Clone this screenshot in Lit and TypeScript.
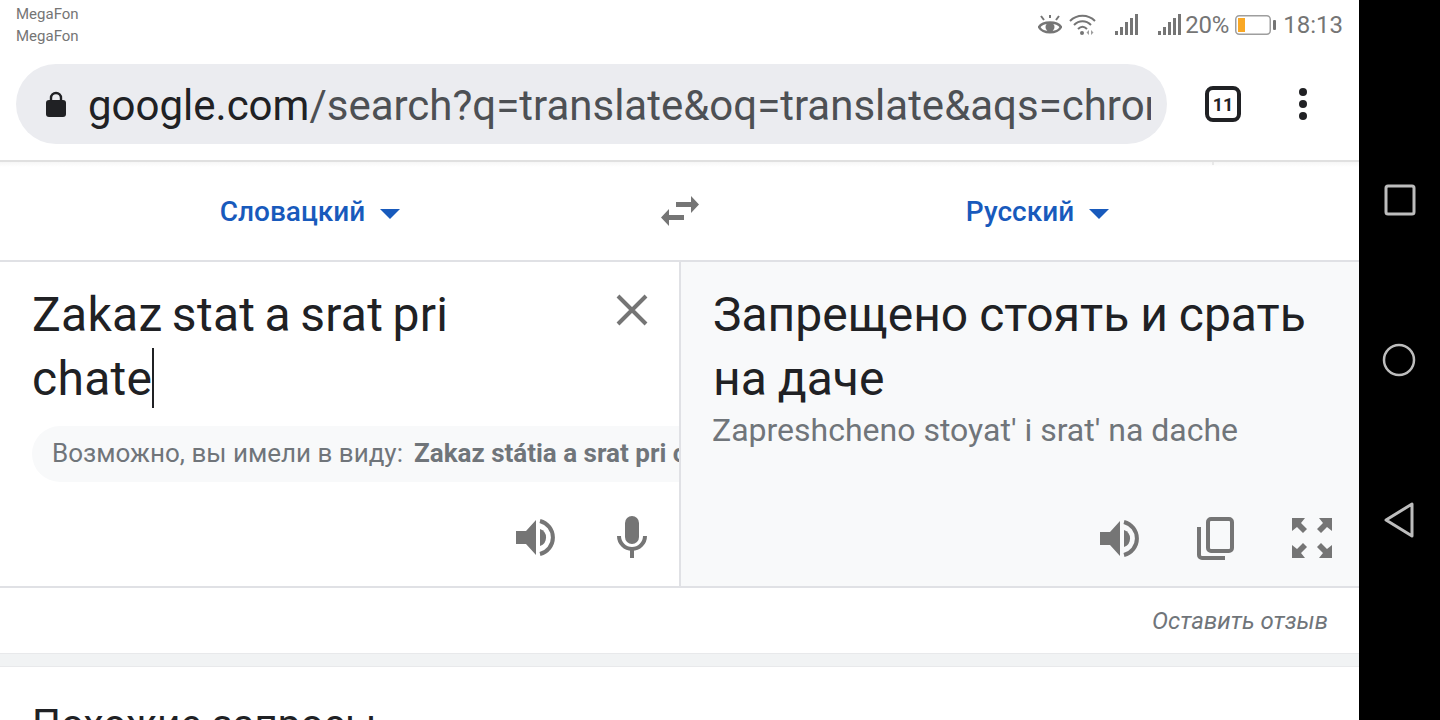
import { LitElement, html, css, svg } from "lit";
import { customElement } from "lit/decorators.js";

const speaker = html`<svg class="ic-speaker" viewBox="0 0 40 40" width="40" height="40" fill="#757575"><path d="M0 13H10L20 2V37L10 26H0Z"/><path d="M24 11A9 9 0 0 1 24 28Z"/><path d="M24 3A17 17 0 0 1 24 36" fill="none" stroke="#757575" stroke-width="4"/></svg>`;
const signal = html`<svg viewBox="0 0 23 22" width="23" height="22" fill="#757575"><rect x="0" y="17" width="3" height="4"/><rect x="5" y="13" width="3" height="8"/><rect x="10" y="8" width="3" height="13"/><rect x="15" y="4" width="3" height="17"/><rect x="20" y="0" width="3" height="21"/></svg>`;
const corner = svg`<path d="M0 0H13L9 5L15 11L11 15L5 9L0 13Z"/>`;

@customElement("app-root")
export class AppRoot extends LitElement {
  static styles = css`
    :host { display: block; width: 1440px; height: 720px; overflow: hidden; font-family: Roboto, "Noto Sans", sans-serif; background: #000; }
    svg { display: block; flex: none; }
    .screen { display: flex; height: 720px; }
    .main { width: 1359px; height: 720px; background: #fff; overflow: hidden; flex: none; }
    .nav { flex: 1; display: flex; flex-direction: column; align-items: center; background: #000; padding-top: 184px; }
    .nav .circle { margin-top: 127px; margin-left: -2px; }
    .nav .back { margin-top: 125px; }

    .status { height: 64px; display: flex; justify-content: space-between; box-sizing: border-box; }
    .carriers { padding: 3px 0 0 16px; font-size: 15px; line-height: 22px; color: #757575; }
    .indicators { display: flex; align-items: center; height: 50px; padding-right: 16px; color: #757575; font-size: 24px; }
    .wifi { margin-left: 7px; }
    .sig1 { margin-left: 19px; }
    .sig2 { margin-left: 20px; }
    .pct { margin-left: 4px; letter-spacing: -0.2px; }
    .batt { margin-left: 6px; }
    .time { margin-left: 7px; }

    .toolbar { height: 96px; display: flex; align-items: flex-start; position: relative; }
    .pill { width: 1151px; height: 80px; margin-left: 16px; background: #ebecf0; border-radius: 40px; display: flex; align-items: center; box-sizing: border-box; padding: 0 16px 0 30px; flex: none; }
    .url { margin-left: 22px; padding-top: 4px; font-size: 42px; line-height: 76px; color: #4d5054; white-space: nowrap; overflow: hidden; min-width: 0; flex: 1; }
    .url b { font-weight: 400; color: #202124; }
    .tabs { margin-left: 38px; width: 36px; height: 36px; box-sizing: border-box; border: 4px solid #202124; border-radius: 8px; margin-top: 22px; display: flex; align-items: center; justify-content: center; font-size: 18px; font-weight: 700; color: #202124; flex: none; }
    .menu { margin-left: 58px; margin-top: 24px; }

    .divider { height: 2px; background: #e0e0e0; position: relative; }
    .tick { position: absolute; left: 1212px; top: 2px; width: 2px; height: 3px; background: #e8e8e8; }
    .lang { height: 98px; display: grid; grid-template-columns: 620px 120px 595px; align-items: center; background: linear-gradient(#f6f6f6, #fff 5px); }
    .lang-item { display: flex; justify-content: center; align-items: center; gap: 15px; color: #185abc; font-size: 28px; font-weight: 500; }
    .swap { justify-self: center; }
    .caret { width: 0; height: 0; border-left: 10px solid transparent; border-right: 10px solid transparent; border-top: 10px solid #185abc; margin-top: 5px; }

    .panels { display: grid; grid-template-columns: 679px 2px 1fr; height: 324px; border-top: 2px solid #e0e1e5; border-bottom: 2px solid #e0e1e5; }
    .vline { background: #e0e1e5; }
    .left, .right { display: flex; flex-direction: column; min-width: 0; overflow: hidden; }
    .right { background: #f8f9fa; }
    .source { padding: 21px 80px 0 32px; font-size: 48px; line-height: 64px; letter-spacing: 0.3px; word-spacing: -3px; color: #202124; position: relative; height: 127px; }
    .cursor { display: inline-block; width: 2px; height: 60px; background: #202124; vertical-align: -13px; margin-left: 0; }
    .close { position: absolute; left: 616px; top: 32px; }
    .chip { margin: 16px 0 0 32px; height: 56px; padding-bottom: 2px; box-sizing: border-box; border-radius: 28px 0 0 28px; background: #f8f9fa; display: flex; align-items: center; padding-left: 20px; font-size: 26px; color: #70757a; white-space: nowrap; overflow: hidden; }
    .chip b { margin-left: 11px; font-weight: 700; }
    .actions { display: flex; align-items: center; height: 42px; margin-top: 34px; }
    .left .actions { padding-left: 516px; }
    .ic-speaker { margin-top: 2px; }
    .left .mic { margin-left: 60px; }
    .right .actions { margin-top: auto; margin-bottom: 27px; padding-left: 419px; }
    .copy { margin-left: 56px; }
    .full { margin-left: 58px; }
    .target { padding: 21px 32px 0 32px; font-size: 48px; line-height: 64px; word-spacing: -1px; color: #202124; white-space: nowrap; }
    .translit { padding: 0 31px; font-size: 32px; line-height: 40px; color: #70757a; margin-top: -1px; }

    .feedback { height: 65px; display: flex; align-items: center; justify-content: flex-end; padding-right: 31px; font-size: 24px; font-style: italic; color: #70757a; }
    .band { height: 12px; background: #f1f3f4; border-top: 1px solid #e8e9eb; border-bottom: 1px solid #e8e9eb; }
    .related { padding: 33px 0 0 32px; font-size: 40.5px; line-height: 48px; color: #202124; }
  `;

  render() {
    return html`<div class="screen">
      <div class="main">
        <div class="status">
          <div class="carriers"><div>MegaFon</div><div>MegaFon</div></div>
          <div class="indicators">
            <svg viewBox="0 0 24 21" width="24" height="21" fill="none" stroke="#757575"><path d="M1 12C5 6 19 6 23 12C19 19 5 19 1 12Z" stroke-width="2.4"/><circle cx="12" cy="12" r="4.5" fill="#757575" stroke="none"/><path d="M3 1L6 5M21 1L18 5M12 0V3" stroke-width="2"/></svg>
            <svg class="wifi" viewBox="0 0 27 22" width="27" height="22" fill="none" stroke="#757575" stroke-width="2"><path d="M1 7C8 0 19 0 26 7"/><path d="M5 11C10 6 17 6 22 11"/><path d="M9 15C12 12 15 12 18 15"/><circle cx="13" cy="19" r="2" fill="#757575" stroke="none"/><path d="M20 16V21L17.5 18.5ZM22 16V21L24.500 18.500Z" fill="#9e9e9e" stroke="none"/></svg>
            <span class="sig1">${signal}</span>
            <span class="sig2">${signal}</span>
            <span class="pct">20%</span>
            <svg class="batt" viewBox="0 0 41 20" width="41" height="20"><rect x="0.750" y="0.750" width="34.500" height="18.500" rx="3.500" fill="#fff" stroke="#9e9e9e" stroke-width="1.500"/><rect x="3" y="3" width="7" height="14" fill="#f9a825"/><rect x="38" y="5" width="3" height="10" rx="1" fill="#757575"/></svg>
            <span class="time">18:13</span>
          </div>
        </div>

        <div class="toolbar">
          <div class="pill">
            <svg viewBox="0 0 20 27" width="20" height="27" fill="#202124"><path d="M5 11V7a5 5 0 0 1 10 0v4" fill="none" stroke="#202124" stroke-width="2.400"/><rect x="0" y="9" width="20" height="17" rx="3"/></svg>
            <div class="url"><b>google.com</b>/search?q=translate&amp;oq=translate&amp;aqs=chrome.0.69i57j0l5.2548j0j7</div>
          </div>
          <div class="tabs">11</div>
          <svg class="menu" viewBox="0 0 8 32" width="8" height="32" fill="#202124"><circle cx="4" cy="4" r="4"/><circle cx="4" cy="16" r="4"/><circle cx="4" cy="28" r="4"/></svg>
        </div>

        <div class="divider"><div class="tick"></div></div>

        <div class="lang">
          <div class="lang-item"><span>Словацкий</span><span class="caret"></span></div>
          <svg class="swap" viewBox="0 0 40 32" width="40" height="32" fill="#757575"><path d="M16 7H31V1L39 9.500L31 18V12H16Z"/><path d="M24 20H9V14L1 22.500L9 31V25H24Z"/></svg>
          <div class="lang-item"><span>Русский</span><span class="caret"></span></div>
        </div>

        <div class="panels">
          <div class="left">
            <div class="source">Zakaz stat a srat pri<br />chate<span class="cursor"></span>
              <svg class="close" viewBox="0 0 32 32" width="32" height="32" fill="none" stroke="#757575" stroke-width="4"><path d="M2 2L30 30M30 2L2 30"/></svg>
            </div>
            <div class="chip"><span>Возможно, вы имели в виду:</span><b>Zakaz státia a srat pri chate</b></div>
            <div class="actions">
              ${speaker}
              <svg class="mic" viewBox="0 0 32 42" width="32" height="42" fill="#757575"><rect x="9" y="0" width="14" height="28" rx="7"/><path d="M3 20a13 13 0 0 0 26 0" fill="none" stroke="#757575" stroke-width="4"/><rect x="14" y="33" width="4" height="9"/></svg>
            </div>
          </div>
          <div class="vline"></div>
          <div class="right">
            <div class="target">Запрещено стоять и срать<br />на даче</div>
            <div class="translit">Zapreshcheno stoyat' i srat' na dache</div>
            <div class="actions">
              ${speaker}
              <svg class="copy" viewBox="0 0 38 45" width="38" height="45" fill="none" stroke="#757575" stroke-width="4"><rect x="12" y="3" width="24" height="32" rx="3"/><path d="M3 11V39a3 3 0 0 0 3 3H29"/></svg>
              <svg class="full" viewBox="0 0 40 40" width="40" height="40" fill="#757575">
                ${corner}
                <g transform="translate(40 0) scale(-1 1)">${corner}</g>
                <g transform="translate(0 40) scale(1 -1)">${corner}</g>
                <g transform="translate(40 40) scale(-1 -1)">${corner}</g>
              </svg>
            </div>
          </div>
        </div>

        <div class="feedback">Оставить отзыв</div>
        <div class="band"></div>
        <div class="related">Похожие запросы</div>
      </div>
      <div class="nav">
        <svg viewBox="0 0 32 32" width="32" height="32" fill="none" stroke="#bdbdbd" stroke-width="3"><rect x="2" y="2" width="28" height="28" rx="2"/></svg>
        <svg class="circle" viewBox="0 0 34 34" width="34" height="34" fill="none" stroke="#bdbdbd" stroke-width="2.500"><circle cx="17" cy="17" r="15"/></svg>
        <svg class="back" viewBox="0 0 32 36" width="32" height="36" fill="none" stroke="#bdbdbd" stroke-width="3" stroke-linejoin="round"><path d="M28 2V34L2 18Z"/></svg>
      </div>
    </div>`;
  }
}
